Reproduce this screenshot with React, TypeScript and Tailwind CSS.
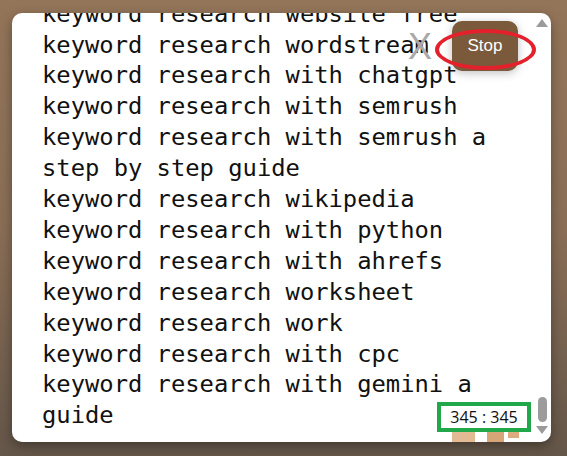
import React from 'react';

const lines = [
  'keyword research website free',
  'keyword research wordstream',
  'keyword research with chatgpt',
  'keyword research with semrush',
  'keyword research with semrush a step by step guide',
  'keyword research wikipedia',
  'keyword research with python',
  'keyword research with ahrefs',
  'keyword research worksheet',
  'keyword research work',
  'keyword research with cpc',
  'keyword research with gemini a guide',
];

const App = () => {
  return (
    <div className="w-[567px] h-[456px] overflow-hidden bg-linear-to-b from-[#937559] via-[#8a6e56] to-[#645649] pt-[13px] pl-[12px]">
      <div className="relative flex w-[539px] h-[429px] bg-white rounded-[10px] overflow-hidden shadow-[0_4px_12px_rgba(0,0,0,0.35)]">
        {/* scrolled list */}
        <div className="flex-1 overflow-hidden">
          <div
            className="mt-[-14.4px] pl-[30px] w-[500px] text-[23.8px] leading-[30.9px] text-[#111]"
            style={{ fontFamily: '"DejaVu Sans Mono", monospace' }}
          >
            {lines.map((line, i) => (
              <div key={i}>{line}</div>
            ))}
          </div>
        </div>

        {/* scrollbar */}
        <div className="flex flex-col items-center w-[12px] mr-[3px] pt-[6px] pb-[8px]">
          <svg width="12" height="8" viewBox="0 0 12 8">
            <path d="M6 0 L12 8 L0 8 Z" fill="#9b9b9b" />
          </svg>
          <div className="flex-1"></div>
          <div className="w-[9px] h-[25px] rounded-full bg-[#9c9c9c] mb-[4px]"></div>
          <svg width="12" height="8" viewBox="0 0 12 8">
            <path d="M0 0 L12 0 L6 8 Z" fill="#9b9b9b" />
          </svg>
        </div>

        {/* close X */}
        <span
          className="absolute left-[396px] top-[14px] text-[36px] leading-[40px] text-[#a9a9a9]"
          style={{ fontFamily: '"Liberation Sans", sans-serif' }}
        >
          X
        </span>

        {/* stop button */}
        <button
          className="absolute left-[440px] top-[8px] w-[66px] h-[50px] rounded-[10px] bg-[#7b5a3b] text-white text-[17px] shadow-[0_2px_10px_rgba(0,0,0,0.25)]"
          style={{ fontFamily: '"Liberation Sans", sans-serif' }}
        >
          Stop
        </button>

        {/* red highlight ellipse */}
        <div className="absolute left-[423px] top-[16px] w-[101px] h-[41px] rounded-[50%] border-[4px] border-[#e3202b]"></div>

        {/* counter with tan blocks below */}
        <div className="absolute left-[425px] top-[389px] flex flex-col">
          <div
            className="w-[94px] h-[30px] border-[4px] border-[#21a84a] bg-white flex items-center justify-center text-[16px] text-[#111]"
            style={{ fontFamily: '"Open Sans", "Liberation Sans", sans-serif' }}
          >
            345 : 345
          </div>
          <div className="flex items-start pl-[15px]">
            <div className="w-[23px] h-[10px] bg-[#e2bb94]"></div>
            <div className="w-[17px] h-[10px] bg-[#d7a678] ml-[12px]"></div>
            <div className="w-[11px] h-[6px] bg-[#dcab80] ml-[4px]"></div>
          </div>
        </div>
      </div>
    </div>
  );
};

export default App;
